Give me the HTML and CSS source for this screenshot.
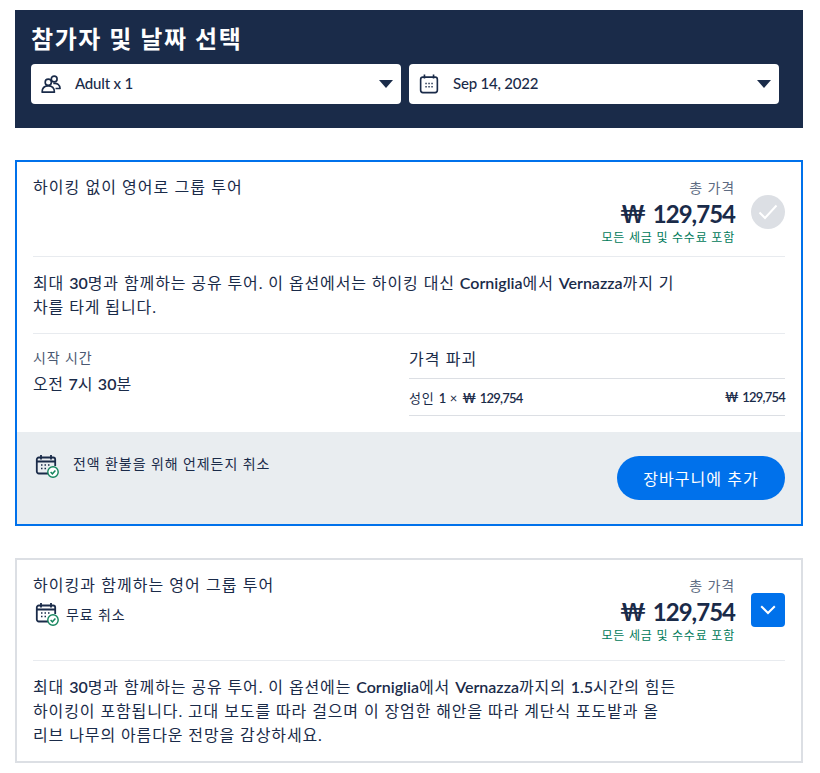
FILE: index.html
```html
<!DOCTYPE html>
<html lang="ko">
<head>
    <meta charset="UTF-8">
    <title>참가자 및 날짜 선택</title>
    <link rel="stylesheet" href="styles.css">
</head>
<body>
    <section class="picker">
        <h2 class="picker-title">참가자 및 날짜 선택</h2>
        <div class="picker-row">
            <div class="select">
                <svg class="select-icon" width="20" height="20" viewBox="0 0 22 22" fill="none" stroke="#1a2b49" stroke-width="1.8">
                    <circle cx="8" cy="9" r="3.4"/>
                    <circle cx="14.5" cy="5.500" r="3.200"/>
                    <path d="M1.200 20c0-4.600 2.600-7 6.800-7s6.800 2.400 6.800 7z" stroke-linejoin="round"/>
                    <path d="M13.500 10.500c4.500-1 7.300 1.500 7.500 5.500h-5" stroke-linejoin="round"/>
                </svg>
                <span class="select-text">Adult x 1</span>
                <span class="caret"></span>
            </div>
            <div class="select">
                <svg class="select-icon" width="20" height="20" viewBox="0 0 22 22" fill="none" stroke="#1a2b49" stroke-width="1.8">
                    <rect x="1.800" y="3.500" width="18.400" height="17" rx="2.500"/>
                    <path d="M6 .5v4.500M16 .5v4.500"/>
                    <path d="M7 10.500h1.500M10.300 10.500h1.500M13.600 10.500h1.500M7 14h1.500M10.300 14h1.500M13.600 14h1.500" stroke-width="1.500"/>
                </svg>
                <span class="select-text">Sep 14, 2022</span>
                <span class="caret"></span>
            </div>
        </div>
    </section>

    <section class="card card-active">
        <div class="card-head">
            <div class="card-name">하이킹 없이 영어로 그룹 투어</div>
            <div class="price">
                <div class="price-label">총 가격</div>
                <div class="price-value">₩ 129,754</div>
                <div class="price-note">모든 세금 및 수수료 포함</div>
            </div>
            <div class="status status-done">
                <svg width="20" height="16" viewBox="0 0 20 16" fill="none" stroke="#fff" stroke-width="2"><path d="M1.500 8.500l5.500 5.500L18.500 1.500"/></svg>
            </div>
        </div>
        <p class="card-desc">최대 <b>30</b>명과 함께하는 공유 투어. 이 옵션에서는 하이킹 대신 <b>Corniglia</b>에서 <b>Vernazza</b>까지 기<br>차를 타게 됩니다.</p>
        <div class="details">
            <div class="start">
                <div class="start-label">시작 시간</div>
                <div class="start-value">오전 <b>7</b>시 <b>30</b>분</div>
            </div>
            <div class="breakdown">
                <div class="breakdown-title">가격 파괴</div>
                <div class="breakdown-row">
                    <span>성인 <b>1</b> <i>×</i> <b>₩ 129,754</b></span>
                    <b>₩ 129,754</b>
                </div>
            </div>
        </div>
        <div class="card-foot">
            <div class="cancel">
                <svg width="25" height="25" viewBox="0 0 25 25" fill="none" stroke="#1a2b49" stroke-width="1.800">
                    <path d="M13 19.500H3.800a2 2 0 0 1-2-2V5.500a2 2 0 0 1 2-2h14.400a2 2 0 0 1 2 2V12"/>
                    <path d="M6 1v4.500M16 1v4.500M2 7.500h18"/>
                    <path d="M6 11h1.500M9.500 11h1.500M13 11h1.500M6 14.500h1.500M9.500 14.500h1.500" stroke-width="1.400"/>
                    <circle cx="18" cy="18" r="5.200" fill="#fff" stroke="#14855d" stroke-width="1.400"/>
                    <path d="M15.600 18l1.800 1.800 3-3.200" stroke="#14855d" stroke-width="1.500"/>
                </svg>
                <span>전액 환불을 위해 언제든지 취소</span>
            </div>
            <button class="add-button">장바구니에 추가</button>
        </div>
    </section>

    <section class="card card-idle">
        <div class="card-head">
            <div class="card-name">
                하이킹과 함께하는 영어 그룹 투어
                <div class="free-cancel">
                    <svg width="25" height="25" viewBox="0 0 25 25" fill="none" stroke="#1a2b49" stroke-width="1.800">
                        <path d="M13 19.500H3.800a2 2 0 0 1-2-2V5.500a2 2 0 0 1 2-2h14.400a2 2 0 0 1 2 2V12"/>
                        <path d="M6 1v4.500M16 1v4.500M2 7.500h18"/>
                        <path d="M6 11h1.500M9.500 11h1.500M13 11h1.500M6 14.500h1.500M9.500 14.500h1.500" stroke-width="1.400"/>
                        <circle cx="18" cy="18" r="5.200" fill="#fff" stroke="#14855d" stroke-width="1.400"/>
                        <path d="M15.600 18l1.800 1.800 3-3.200" stroke="#14855d" stroke-width="1.500"/>
                    </svg>
                    <span>무료 취소</span>
                </div>
            </div>
            <div class="price">
                <div class="price-label">총 가격</div>
                <div class="price-value">₩ 129,754</div>
                <div class="price-note">모든 세금 및 수수료 포함</div>
            </div>
            <div class="status status-open">
                <svg width="16" height="10" viewBox="0 0 16 10" fill="none" stroke="#fff" stroke-width="2"><path d="M1.200 1.200L8 8l6.800-6.800"/></svg>
            </div>
        </div>
        <p class="card-desc">최대 <b>30</b>명과 함께하는 공유 투어. 이 옵션에는 <b>Corniglia</b>에서 <b>Vernazza</b>까지의 <b>1.5</b>시간의 힘든<br>하이킹이 포함됩니다. 고대 보도를 따라 걸으며 이 장엄한 해안을 따라 계단식 포도밭과 올<br>리브 나무의 아름다운 전망을 감상하세요.</p>
    </section>
</body>
</html>
```

FILE: styles.css
```css
* {
    box-sizing: border-box;
    letter-spacing: 0.065em;
}
body {
    font-family: 'Lato', 'Noto Sans CJK KR', sans-serif;
    color: #1a2b49;
    background-color: #fff;
    margin: 0;
    padding: 10px 17px 10px 15px;
}
b {
    font-weight: 600;
    letter-spacing: 0;
}
.picker {
    background-color: #1a2b49;
    height: 118px;
    padding: 12px 24px 0 16px;
}
.picker-title {
    color: #fff;
    font-size: 24px;
    font-weight: 700;
    line-height: 34px;
    margin: 0 0 8px;
}
.picker-row {
    display: flex;
    gap: 8px;
}
.select {
    flex: 1;
    height: 40px;
    background-color: #fff;
    border-radius: 4px;
    display: flex;
    align-items: center;
    padding: 0 8px 0 10px;
    font-size: 15px;
    font-weight: 500;
}
.select-icon {
    margin-right: 14px;
}
.select-text {
    flex: 1;
    letter-spacing: -0.2px;
    padding-bottom: 3px;
}
.caret {
    border-left: 7.500px solid transparent;
    border-right: 7.500px solid transparent;
    border-top: 8px solid #1a2b49;
}
.card {
    border: 2px solid #dcdfe4;
    margin-top: 32px;
}
.card-active {
    border-color: #0071eb;
}
.card-idle {
    height: 205px;
}
.card-head {
    display: flex;
    align-items: flex-start;
    margin: 0 16px;
    padding: 14px 0 11px;
    border-bottom: 1px solid #e8ebef;
}
.card-idle .card-head {
    padding-bottom: 17px;
}
.card-name {
    flex: 1;
    font-size: 16px;
    line-height: 22px;
}
.free-cancel {
    display: flex;
    align-items: center;
    gap: 6px;
    font-size: 14px;
    line-height: 20px;
    margin-top: 6px;
}
.free-cancel svg,
.cancel svg {
    margin-left: 2px;
}
.price {
    text-align: right;
    margin-top: 3px;
}
.price-label {
    font-size: 14px;
    line-height: 18px;
    color: #5d6b82;
}
.price-value {
    font-size: 24px;
    font-weight: 700;
    letter-spacing: -1px;
    word-spacing: 3px;
    line-height: 34px;
}
.price-note {
    font-size: 12px;
    line-height: 14px;
    color: #007a5a;
}
.status {
    width: 34px;
    height: 34px;
    margin: 19px 0 0 16px;
    display: flex;
    align-items: center;
    justify-content: center;
}
.status-done {
    background-color: #dcdfe4;
    border-radius: 50%;
}
.status-open {
    background-color: #0071eb;
    border-radius: 4px;
}
.card-desc {
    font-size: 16px;
    letter-spacing: 0.055em;
    line-height: 24px;
    margin: 0 16px;
    padding: 14px 60px 14px 0;
}
.details {
    display: flex;
    margin: 0 16px;
    border-top: 1px solid #e8ebef;
    padding-top: 14px;
    height: 99px;
}
.start {
    width: 376px;
}
.start-label {
    font-size: 14px;
    line-height: 20px;
    color: #4a5871;
}
.start-value {
    font-size: 16px;
    letter-spacing: 0.04em;
    line-height: 24px;
    margin-top: 4px;
}
.breakdown {
    flex: 1;
    margin-top: -1px;
}
.breakdown-title {
    font-size: 16px;
    line-height: 24px;
    padding-bottom: 7px;
    border-bottom: 1px solid #dcdfe4;
}
.breakdown-row {
    display: flex;
    justify-content: space-between;
    align-items: center;
    height: 37px;
    font-size: 13px;
    border-bottom: 1px solid #dcdfe4;
}
.breakdown-row b {
    letter-spacing: -0.8px;
    word-spacing: 2px;
}
.breakdown-row i {
    font-style: normal;
}
.card-foot {
    background-color: #e9edf0;
    height: 92px;
    padding: 22px 16px 0;
    display: flex;
    justify-content: space-between;
    align-items: flex-start;
}
.cancel {
    display: flex;
    align-items: flex-start;
    gap: 13px;
    font-size: 14px;
    line-height: 20px;
}
.add-button {
    width: 168px;
    height: 44px;
    background-color: #0071eb;
    color: #fff;
    border: none;
    border-radius: 22px;
    font-family: inherit;
    font-size: 16px;
    margin-top: 2px;
}
```
